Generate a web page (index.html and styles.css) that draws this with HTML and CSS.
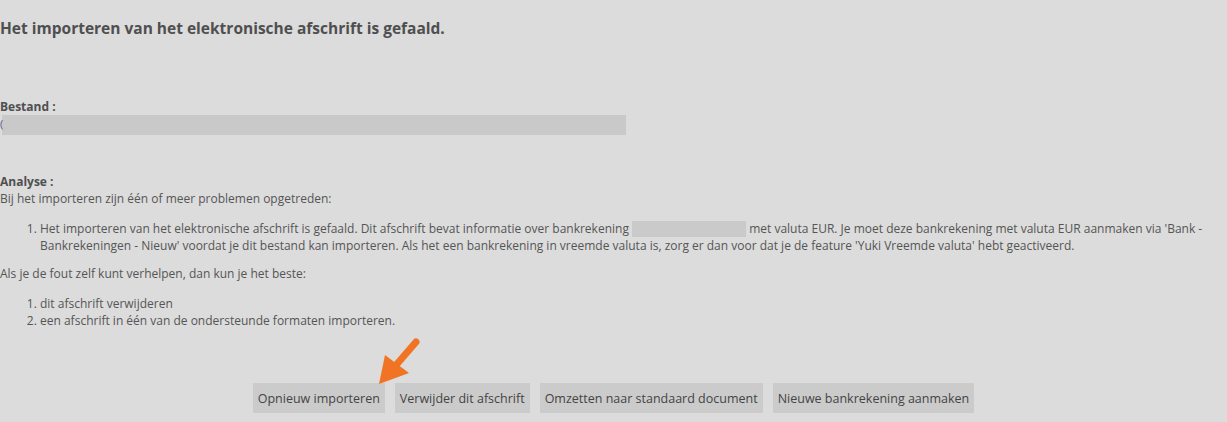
FILE: index.html
```html
<!DOCTYPE html>
<html lang="nl">
<head>
  <meta charset="UTF-8">
  <meta name="viewport" content="width=device-width, initial-scale=1.0">
  <title>Import mislukt</title>
  <link rel="stylesheet" href="styles.css">
</head>
<body>
  <div class="page">
    <h1 class="title">Het importeren van het elektronische afschrift is gefaald.</h1>

    <div class="section file">
      <div class="label">Bestand :</div>
      <div class="file-name"><span class="file-char">(</span></div>
    </div>

    <div class="section analyse">
      <div class="label">Analyse :</div>
      <p>Bij het importeren zijn één of meer problemen opgetreden:</p>
      <ol class="list">
        <li>Het importeren van het elektronische afschrift is gefaald. Dit afschrift bevat informatie over bankrekening <span class="masked"></span> met valuta EUR. Je moet deze bankrekening met valuta EUR aanmaken via 'Bank - Bankrekeningen - Nieuw' voordat je dit bestand kan importeren. Als het een bankrekening in vreemde valuta is, zorg er dan voor dat je de feature 'Yuki Vreemde valuta' hebt geactiveerd.</li>
      </ol>
      <p>Als je de fout zelf kunt verhelpen, dan kun je het beste:</p>
      <ol class="list last">
        <li>dit afschrift verwijderen</li>
        <li>een afschrift in één van de ondersteunde formaten importeren.</li>
      </ol>
    </div>

    <div class="actions">
      <button class="btn">Opnieuw importeren
        <svg class="arrow" width="60" height="60" viewBox="0 0 60 60">
          <line x1="53" y1="9" x2="34" y2="31" stroke="#f07424" stroke-width="7" stroke-linecap="round"/>
          <polygon points="16,51 22,22 46,40" fill="#f07424"/>
        </svg>
      </button>
      <button class="btn">Verwijder dit afschrift</button>
      <button class="btn">Omzetten naar standaard document</button>
      <button class="btn">Nieuwe bankrekening aanmaken</button>
    </div>
  </div>
</body>
</html>
```

FILE: styles.css
```css
body {
  margin: 0;
  background-color: #dcdcdc;
  font-family: "Open Sans", "Noto Sans", sans-serif;
  font-size: 12px;
  color: #555;
  height: 422px;
  overflow: hidden;
}
.page {
  padding-top: 16px;
}
.title {
  margin: 0;
  font-size: 15.5px;
  font-weight: bold;
  color: #4f4f4f;
  line-height: 24px;
}
.file {
  padding-top: 59px;
}
.label {
  font-weight: bold;
  color: #4f4f4f;
  line-height: 16px;
}
.file-name {
  margin-left: 2px;
  width: 624px;
  height: 20px;
  background-color: #c9c9c9;
  position: relative;
}
.file-char {
  position: absolute;
  left: -2px;
  top: 1px;
  color: #4a5a8a;
  font-size: 11px;
}
.analyse {
  padding-top: 39px;
}
.analyse p {
  margin: 0;
  line-height: 17px;
}
.list {
  margin: 14px 0 11px 0;
  padding-left: 40px;
  line-height: 16.5px;
}
.list.last {
  margin-bottom: 0;
}
.masked {
  display: inline-block;
  width: 114px;
  height: 16px;
  background-color: #cacaca;
  vertical-align: -4px;
}
.actions {
  display: flex;
  justify-content: center;
  gap: 10px;
  margin-top: 54px;
}
.btn {
  font-family: inherit;
  font-size: 12.5px;
  color: #444;
  background-color: #cbcbcb;
  border: none;
  height: 30px;
  padding: 0 5px;
  position: relative;
}
.arrow {
  position: absolute;
  left: 110px;
  top: -50px;
}
```
